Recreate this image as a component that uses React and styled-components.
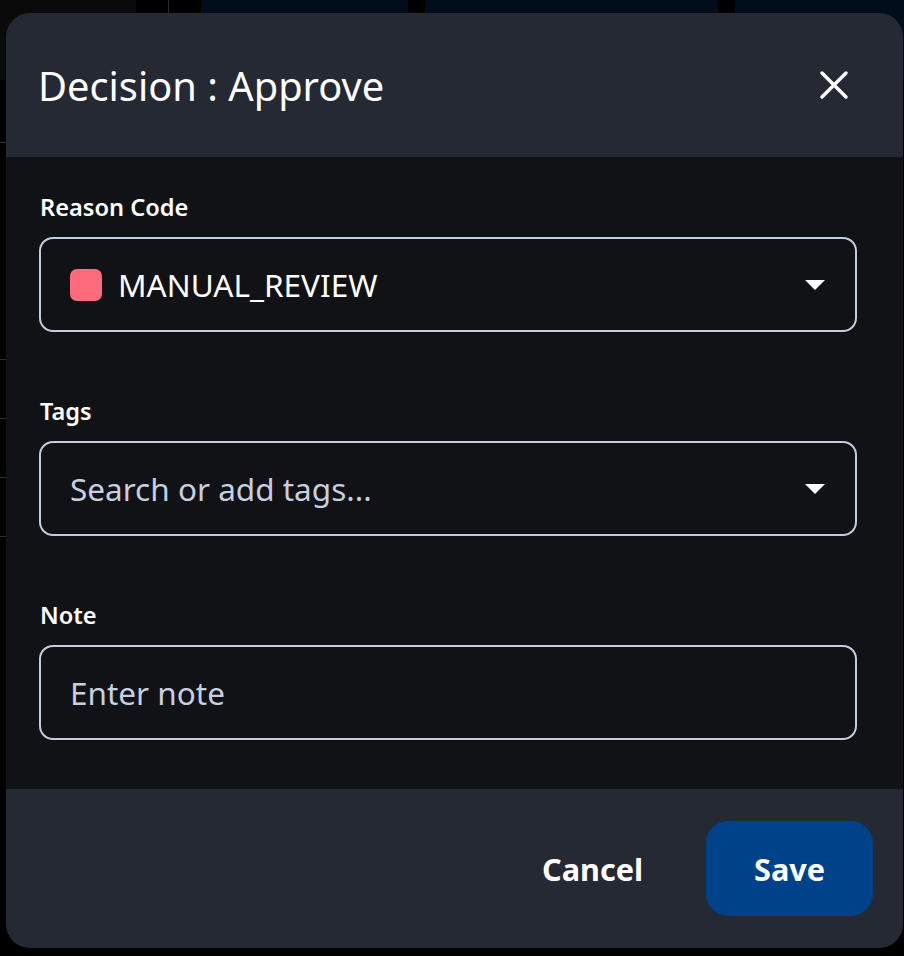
import React from "react";
import styled, { createGlobalStyle } from "styled-components";

const Global = createGlobalStyle`
  html, body { margin: 0; padding: 0; background: #000; }
  body { font-family: "Noto Sans", "Open Sans", sans-serif; }
  * { box-sizing: border-box; }
`;

const Page = styled.div`
  position: relative;
  width: 904px;
  height: 956px;
  background: #000;
  overflow: hidden;
`;

const TopStrip = styled.div`
  display: flex;
  height: 80px;
`;

const Tile = styled.div`
  width: ${(p) => p.$w}px;
  flex: none;
  background: ${(p) => p.$bg};
  border-right: ${(p) => (p.$line ? "1px solid #2a2a2a" : "none")};
`;

const SideRail = styled.div`
  display: flex;
  flex-direction: column;
  width: 6px;
  margin-top: 62px;
`;

const RailRow = styled.div`
  height: ${(p) => p.$h}px;
  border-bottom: 1px solid #2b2d33;
`;

const Modal = styled.div`
  position: absolute;
  top: 13px;
  left: 6px;
  width: 897px;
  height: 935px;
  border-radius: 24px;
  overflow: hidden;
  display: flex;
  flex-direction: column;
  background: #111216;
  color: #fff;
`;

const Header = styled.header`
  height: 144px;
  flex: none;
  display: flex;
  align-items: center;
  justify-content: space-between;
  padding: 0 55px 0 32px;
  background: #252933;
`;

const Title = styled.h2`
  margin: 0;
  font-size: 39.8px;
  font-weight: 400;
  color: #fff;
`;

const CloseButton = styled.button`
  width: 28px;
  height: 28px;
  padding: 0;
  border: none;
  background: transparent;
  display: flex;
  align-items: center;
  justify-content: center;
  cursor: pointer;
`;

const Body = styled.div`
  flex: 1;
  display: flex;
  flex-direction: column;
  gap: 63px;
  padding: 34px 46px 0 33px;
`;

const Field = styled.div`
  display: flex;
  flex-direction: column;
  gap: 15px;
`;

const Label = styled.label`
  font-size: 23.6px;
  line-height: 30px;
  padding-top: 1px;
  font-weight: 600;
  color: #fff;
  padding-left: 1px;
`;

const InputBox = styled.div`
  height: 95px;
  border: 2px solid #c3cde0;
  border-radius: 14px;
  background: #111216;
  display: flex;
  align-items: center;
  padding: 0 30px 0 29px;
  gap: 16px;
  font-size: 31.5px;
  color: ${(p) => (p.$placeholder ? "#c7cfe0" : "#fff")};
`;

const Swatch = styled.span`
  width: 32px;
  height: 32px;
  flex: none;
  border-radius: 7px;
  background: #fd6b7c;
`;

const Value = styled.span`
  flex: 1;
  white-space: nowrap;
`;

const Caret = styled.span`
  width: 0;
  height: 0;
  border-left: 10px solid transparent;
  border-right: 10px solid transparent;
  border-top: 10px solid #fff;
  flex: none;
`;

const Footer = styled.footer`
  height: 159px;
  flex: none;
  display: flex;
  align-items: center;
  justify-content: flex-end;
  gap: 17px;
  padding: 0 30px;
  background: #252933;
`;

const Button = styled.button`
  height: 95px;
  padding: 0 ${(p) => (p.$primary ? 48 : 46)}px;
  border: none;
  border-radius: 22px;
  font-family: "Noto Sans", sans-serif;
  font-size: 30.6px;
  font-weight: 700;
  color: #fff;
  background: ${(p) => (p.$primary ? "#00428a" : "transparent")};
  cursor: pointer;
`;

export default function App() {
  return (
    <Page>
      <Global />
      <TopStrip>
        <Tile $w={136} $bg="#0a0a0a" />
        <Tile $w={33} $bg="#000" $line />
        <Tile $w={32} $bg="#000" />
        <Tile $w={207} $bg="#020d1b" />
        <Tile $w={17} $bg="#000" />
        <Tile $w={293} $bg="#020d1b" />
        <Tile $w={17} $bg="#000" />
        <Tile $w={169} $bg="#020d1b" />
      </TopStrip>
      <SideRail>
        <RailRow $h={0} />
        <RailRow $h={217} />
        <RailRow $h={59} />
        <RailRow $h={59} />
        <RailRow $h={59} />
      </SideRail>
      <Modal role="dialog">
        <Header>
          <Title>Decision : Approve</Title>
          <CloseButton aria-label="Close">
            <svg width="28" height="28" viewBox="0 0 28 28">
              <path d="M2 2 L26 26 M26 2 L2 26" stroke="#fff" strokeWidth="3.4" strokeLinecap="round" />
            </svg>
          </CloseButton>
        </Header>
        <Body>
          <Field>
            <Label>Reason Code</Label>
            <InputBox>
              <Swatch />
              <Value>MANUAL_REVIEW</Value>
              <Caret />
            </InputBox>
          </Field>
          <Field>
            <Label>Tags</Label>
            <InputBox $placeholder>
              <Value>Search or add tags...</Value>
              <Caret />
            </InputBox>
          </Field>
          <Field>
            <Label>Note</Label>
            <InputBox $placeholder>
              <Value>Enter note</Value>
            </InputBox>
          </Field>
        </Body>
        <Footer>
          <Button>Cancel</Button>
          <Button $primary>Save</Button>
        </Footer>
      </Modal>
    </Page>
  );
}
